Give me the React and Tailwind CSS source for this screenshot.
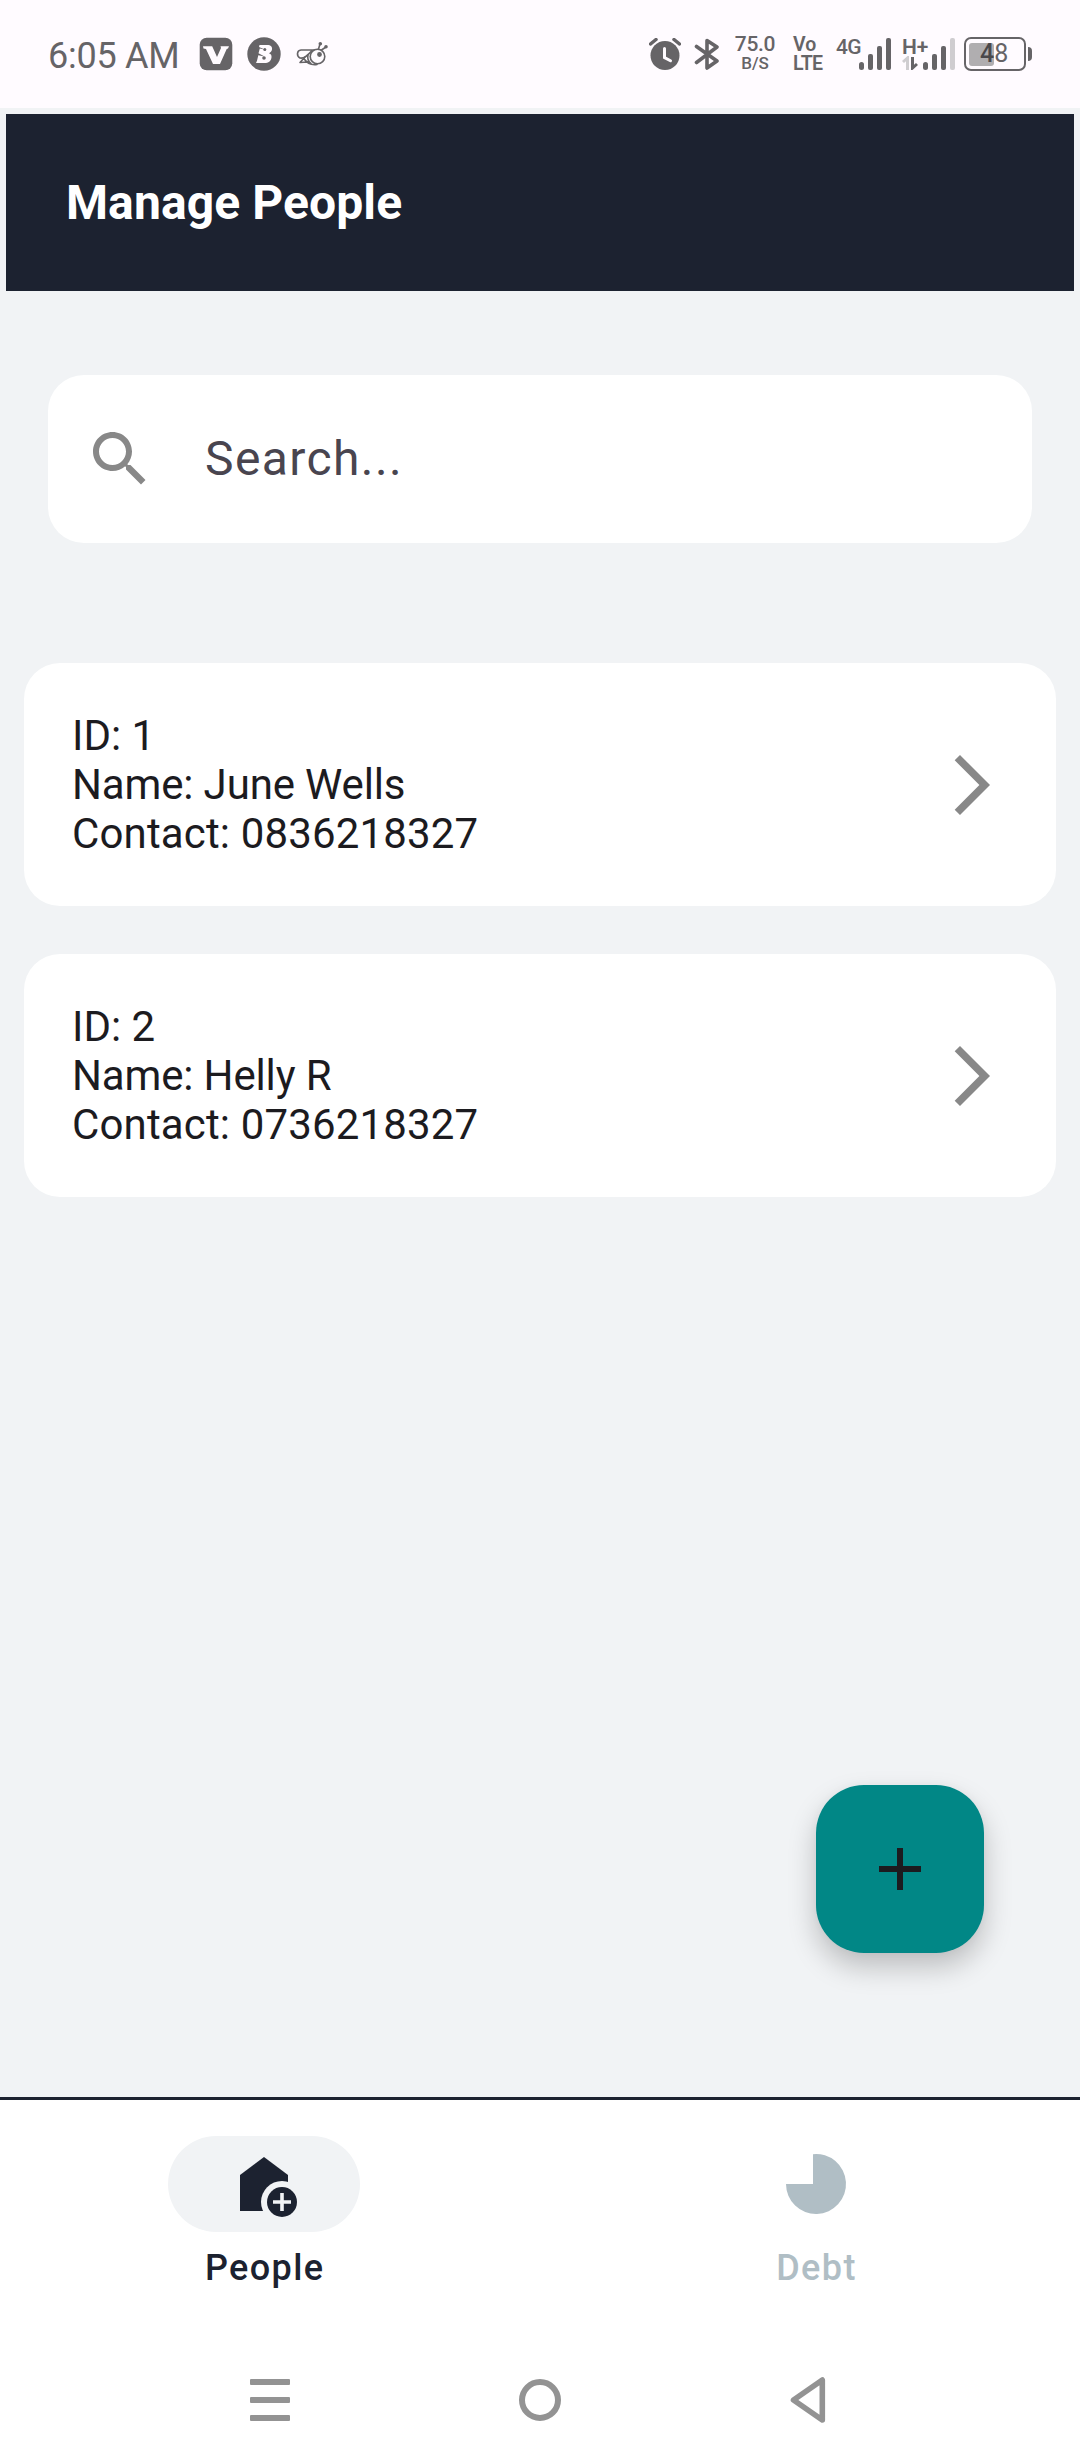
const people = [
  { id: 1, name: "June Wells", contact: "0836218327" },
  { id: 2, name: "Helly R", contact: "0736218327" },
];

function Bars({ weak, className }) {
  return (
    <svg className={className} width="32" height="32" viewBox="0 0 32 32" fill="#666467">
      <rect x="0" y="24" width="5" height="8" rx="2.5" />
      <rect x="9" y="16" width="5" height="16" rx="2" />
      <rect x="18" y="8" width="5" height="24" rx="2" />
      <rect x="27" y="0" width="5" height="32" rx="2" fill={weak ? "#cfcdd0" : "#666467"} />
    </svg>
  );
}

function StatusBar() {
  return (
    <div className="flex h-[108px] items-center bg-[#fffbff] pl-12 text-[#666467]">
      <span className="w-[134px] pt-[3px] text-[36px] leading-[42px] tracking-[-0.25px] whitespace-nowrap">6:05 AM</span>
      <svg className="ml-[17px] shrink-0" width="34" height="34" viewBox="0 0 34 34">
        <rect x="0.7" y="0.7" width="32.6" height="32.6" rx="7" fill="#666467" />
        <path d="M4 9.300h9.200L18 20l4-9-.5-1.700H30l-1 2.200-1.300.5L21 27h-7L7 12l-2.500-.5z" fill="#fffbff" />
      </svg>
      <svg className="ml-[14px] shrink-0" width="34" height="34" viewBox="0 0 34 34">
        <circle cx="17" cy="17" r="16.700" fill="#666467" />
        <path d="M12.500 8H20c4 0 5.500 2 5 4.500-.3 2-1.500 3-3 3.700 2 .7 2.800 2 2.500 4.200C24 24 21.500 26 17.500 26H9l1-2.200 1.300-5.500 6.200 1.200-6-3.300 1.300-4.700 5.500 1.200L12 10z" fill="#fffbff" />
        <circle cx="17.800" cy="12.600" r="1.500" fill="#666467" />
        <circle cx="17" cy="21" r="1.800" fill="#666467" />
      </svg>
      <svg className="ml-[15px] shrink-0" width="34" height="26" viewBox="0 0 34 26" fill="none" stroke="#666467" strokeWidth="1.600" strokeLinecap="round" strokeLinejoin="round">
        <circle cx="21.500" cy="15.500" r="7.300" />
        <circle cx="23.500" cy="13.500" r="1.600" fill="#666467" />
        <path d="M18 9H5C0.500 9.500.5 15 4 17c4.500 1 8.500-3.500 12-7.500" />
        <path d="M9 16L4 21.500l8-.5M7.500 17C10 21 14 24.500 21 23.500M12 14c-.8 3 .5 6.500 3 8.500" />
        <path d="M22.500 8l1.500-5M25.500 9l4.500-3" />
        <circle cx="24.300" cy="2.800" r="1" fill="#666467" />
        <circle cx="30" cy="5.800" r="1" fill="#666467" />
      </svg>

      <svg className="ml-[319px] shrink-0" width="32" height="32" viewBox="0 0 32 32">
        <circle cx="16" cy="17.500" r="14.500" fill="#666467" />
        <path d="M1.500 6L7 1.500M30.500 6L25 1.500" stroke="#666467" strokeWidth="3.500" strokeLinecap="round" />
        <path d="M15.500 10.500v9l6 3.200" stroke="#fffbff" strokeWidth="3" fill="none" strokeLinecap="round" />
      </svg>
      <svg className="ml-[13px] shrink-0" width="26" height="32" viewBox="0 0 26 32" fill="none" stroke="#666467" strokeWidth="3.600" strokeLinecap="round" strokeLinejoin="round">
        <path d="M2.500 8.500L23 23l-10 7V2.500L23 9 2.500 24.500" />
      </svg>
      <div className="ml-[14px] flex w-[42px] shrink-0 flex-col items-center font-medium">
        <span className="text-[21px] leading-[18px] tracking-[-0.3px]">75.0</span>
        <span className="text-[17px] leading-[20px]">B/S</span>
      </div>
      <div className="ml-[17px] flex w-[43px] shrink-0 flex-col text-[19.500px] leading-[19px] font-semibold">
        <span>Vo</span>
        <span className="tracking-[-0.6px]">LTE</span>
      </div>
      <div className="flex h-8 shrink-0">
        <span className="w-[23px] text-[21px] leading-[18px] font-medium tracking-[-0.8px] whitespace-nowrap">4G</span>
        <Bars />
      </div>
      <div className="ml-[11px] flex h-8 shrink-0">
        <div className="flex w-[21px] flex-col">
          <span className="text-[21px] leading-[18px] font-semibold whitespace-nowrap">H+</span>
          <svg width="16" height="14" viewBox="0 0 16 14" fill="none" strokeWidth="3">
            <path d="M5.500 14V2L1 6" stroke="#cfcdd0" />
            <path d="M10.500 1V12L15 8" stroke="#666467" />
          </svg>
        </div>
        <Bars weak />
      </div>
      <div className="ml-[9px] flex shrink-0 items-center">
        <div className="flex h-[34px] w-[62px] items-center rounded-[7px] border-2 border-[#666467] pl-[3px]">
          <div className="h-[23px] w-[25px] shrink-0 rounded-[3px] bg-[#b0aeb0]" />
          <span className="-ml-[14px] text-[25px] leading-[24px] text-[#666467]"><b className="font-medium text-[#4a484b]">4</b>8</span>
        </div>
        <div className="ml-[2px] h-[14px] w-1 rounded-r-[4px] bg-[#666467]" />
      </div>
    </div>
  );
}

function SearchField() {
  return (
    <div className="mx-12 mt-[84px] flex h-[168px] items-center rounded-[36px] bg-white pl-9">
      <svg width="72" height="72" viewBox="0 0 24 24" fill="#888888">
        <path d="M15.500 14h-.79l-.28-.27C15.410 12.590 16 11.110 16 9.500 16 5.910 13.090 3 9.500 3S3 5.910 3 9.500 5.910 16 9.500 16c1.610 0 3.090-.59 4.230-1.570l.27.28v.79l5 4.990L20.490 19l-4.990-5zm-6 0C7.010 14 5 11.990 5 9.500S7.010 5 9.500 5 14 7.010 14 9.500 11.990 14 9.500 14z" />
      </svg>
      <span className="ml-[49px] text-[48px] leading-[72px] tracking-[1.4px] text-[#49454f]">Search...</span>
    </div>
  );
}

function PersonCard({ person }) {
  return (
    <div className="flex items-center justify-between rounded-[36px] bg-white p-12">
      <div className="text-[42px] leading-[49px] text-[#1c1b1f]">
        <p>ID: {person.id}</p>
        <p className="tracking-[-0.15px]">Name: {person.name}</p>
        <p className="tracking-[0.15px]">Contact: {person.contact}</p>
      </div>
      <svg width="72" height="72" viewBox="0 0 24 24" fill="#888888">
        <path d="M6.230 20.230L8 22l10-10L8 2 6.230 3.770 14.460 12z" />
      </svg>
    </div>
  );
}

function BottomNav() {
  return (
    <nav className="flex h-[252px] gap-6 border-t-[3px] border-[#1c2230] pt-9 text-[36px] leading-[48px] font-medium tracking-[1.4px]">
      <div className="flex flex-1 flex-col items-center text-[#1c2230]">
        <div className="flex h-24 w-48 items-center justify-center rounded-full bg-[#f1f3f5]">
          <svg width="72" height="72" viewBox="0 0 72 72">
            <path d="M12 63V27L36 9l24 18v36z" fill="#1c2230" />
            <circle cx="54" cy="54" r="21" fill="#f1f3f5" />
            <circle cx="54" cy="54" r="15" fill="#1c2230" />
            <path d="M54 45v18M45 54h18" stroke="#f1f3f5" strokeWidth="3.600" />
          </svg>
        </div>
        <span className="mt-3 pl-[1.500px]">People</span>
      </div>
      <div className="flex flex-1 flex-col items-center text-[#b0bec5]">
        <div className="flex h-24 w-48 items-center justify-center">
          <svg width="72" height="72" viewBox="0 0 72 72" fill="currentColor">
            <path d="M33 36V6.150A30 30 0 1 1 6 36z" />
          </svg>
        </div>
        <span className="mt-3 pl-[1px]">Debt</span>
      </div>
    </nav>
  );
}

function SystemNav() {
  return (
    <div className="flex h-[111px] items-center px-[234px] pb-[9px]">
      <svg width="72" height="72" viewBox="0 0 72 72" fill="#939393">
        <rect x="16" y="15" width="40" height="6" rx="1" />
        <rect x="16" y="33" width="40" height="6" rx="1" />
        <rect x="16" y="51" width="40" height="6" rx="1" />
      </svg>
      <svg className="ml-[198px]" width="72" height="72" viewBox="0 0 72 72">
        <circle cx="36" cy="36" r="18" fill="none" stroke="#939393" strokeWidth="6" />
      </svg>
      <svg className="ml-[198px]" width="72" height="72" viewBox="0 0 72 72">
        <path d="M48.300 16v40L19.500 36z" fill="none" stroke="#939393" strokeWidth="5.600" strokeLinejoin="round" />
      </svg>
    </div>
  );
}

export default function App() {
  return (
    <div className="flex h-[2460px] w-[1080px] flex-col overflow-hidden bg-white font-[Roboto,sans-serif]">
      <StatusBar />
      <main className="relative flex-1 bg-[#f1f3f5] pt-[6px]">
        <header className="mx-[6px] flex h-[177px] items-center bg-[#1c2230] pl-[60px]">
          <h1 className="text-[48px] leading-[56px] font-bold tracking-[0.1px] text-white">Manage People</h1>
        </header>
        <SearchField />
        <section className="mt-[120px] flex flex-col gap-12 px-6">
          {people.map((p) => (
            <PersonCard key={p.id} person={p} />
          ))}
        </section>
        <button className="absolute right-24 bottom-36 flex size-[168px] items-center justify-center rounded-[48px] bg-[#018786] shadow-[0_14px_28px_rgba(0,0,0,0.22),0_0_10px_rgba(0,0,0,0.03)]">
          <svg width="72" height="72" viewBox="0 0 24 24" fill="#1c1b1f">
            <path d="M19 13h-6v6h-2v-6H5v-2h6V5h2v6h6v2z" />
          </svg>
        </button>
      </main>
      <BottomNav />
      <SystemNav />
    </div>
  );
}
